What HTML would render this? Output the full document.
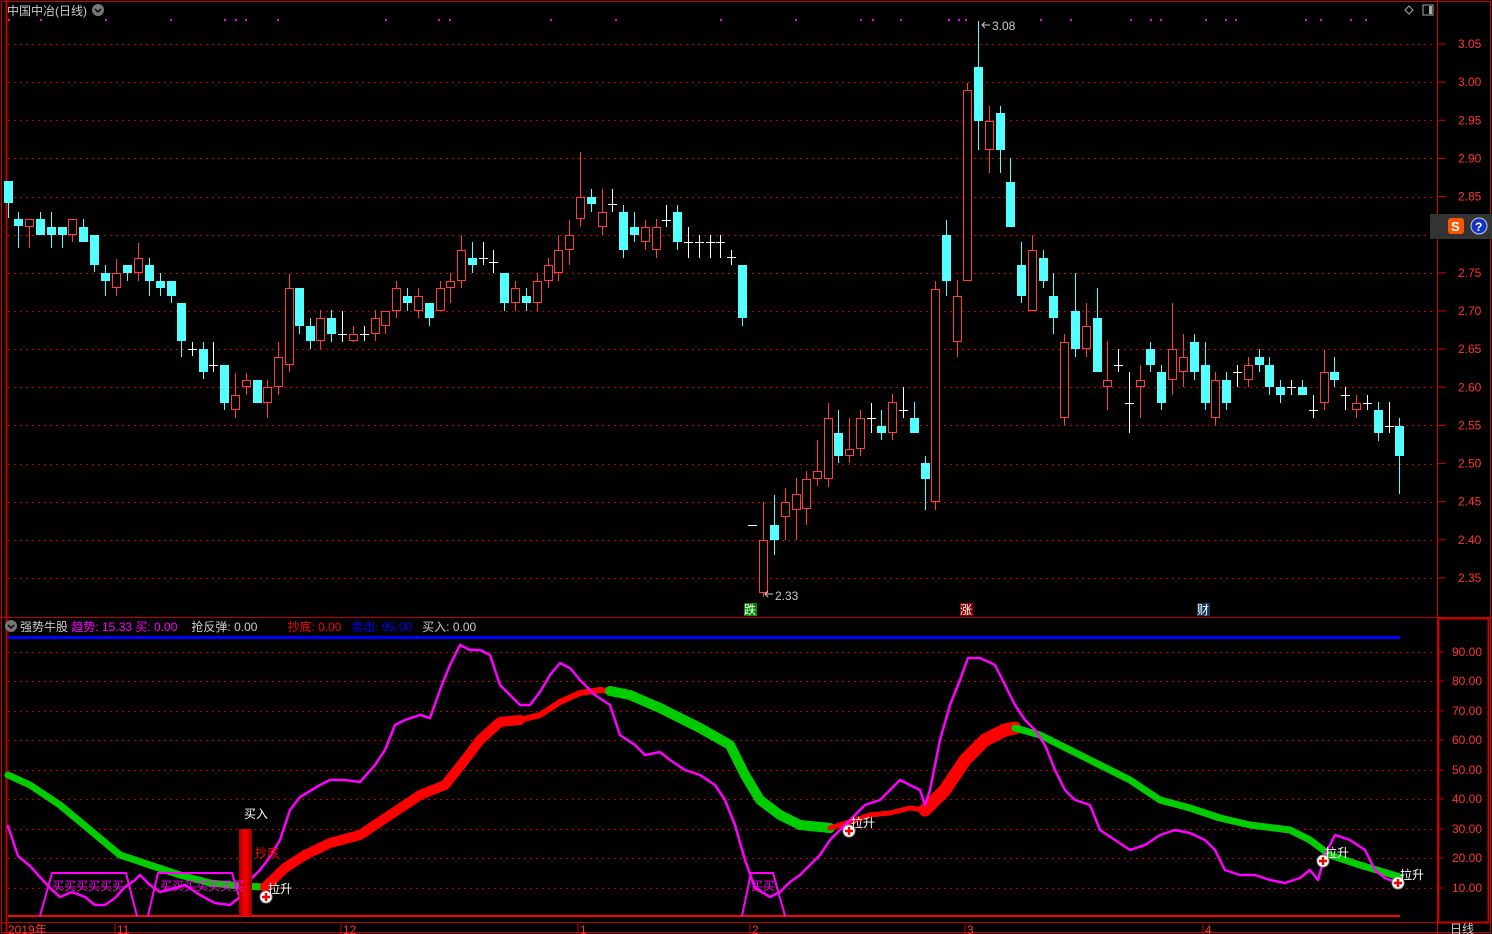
<!DOCTYPE html>
<html><head><meta charset="utf-8"><style>
html,body{margin:0;padding:0;background:#000;width:1492px;height:934px;overflow:hidden}
svg{display:block}
text{font-family:"Liberation Sans","Noto Sans CJK SC",sans-serif}
</style></head><body>
<svg id="s" width="1492" height="934" xmlns="http://www.w3.org/2000/svg">
<rect width="1492" height="934" fill="#000"/>
<g id="grid" stroke="#b00" stroke-width="1" stroke-dasharray="2,4"></g>
<!-- frame -->
<rect x="1.5" y="1.5" width="1489" height="931" fill="none" stroke="#c00" stroke-width="1"/>
<line x1="6.5" y1="0" x2="6.5" y2="934" stroke="#c00" stroke-width="2"/>
<line x1="1437.5" y1="0" x2="1437.5" y2="934" stroke="#c00"/>
<line x1="0" y1="617.5" x2="1492" y2="617.5" stroke="#b00"/>
<rect x="1438.5" y="618.5" width="50" height="304" fill="none" stroke="#c00" stroke-width="2"/>
<line x1="0" y1="922.5" x2="1437" y2="922.5" stroke="#b00"/>
<line x1="8" y1="637.5" x2="1400" y2="637.5" stroke="#00f" stroke-width="3"/>
<line x1="8" y1="916" x2="1400" y2="916" stroke="#f00" stroke-width="2"/>
<g id="candles"></g>
<g id="lower"></g>
<!-- header texts -->
<text x="7" y="15" fill="#ccc" font-size="12">中国中冶(日线)</text>
<circle cx="98" cy="10" r="6" fill="#777"/><path d="M95 9l3 3 3-3" stroke="#000" stroke-width="1.5" fill="none"/>
<path d="M1409 6l4 4-4 4-4-4z" stroke="#aaa" fill="none"/>
<rect x="1423" y="5" width="10" height="10" stroke="#aaa" fill="none"/><rect x="1429" y="6" width="3" height="8" fill="#aaa"/>
<text x="992" y="30" fill="#ccc" font-size="12">3.08</text>
<path d="M990 25h-8m3-3l-3 3 3 3" stroke="#ccc" fill="none"/>
<text x="775" y="600" fill="#ccc" font-size="12">2.33</text>
<path d="M773 594h-8m3-3l-3 3 3 3" stroke="#ccc" fill="none"/>
<rect x="744" y="603" width="13" height="13" fill="#080"/><text x="744" y="614" fill="#fff" font-size="12">跌</text>
<rect x="960" y="603" width="13" height="13" fill="#800"/><text x="960" y="614" fill="#fff" font-size="12">涨</text>
<rect x="1197" y="603" width="13" height="13" fill="#135"/><text x="1197" y="614" fill="#fff" font-size="12">财</text>
<g id="axis" fill="#f33" font-size="12"></g>
<!-- icons panel -->
<rect x="1430" y="214" width="62" height="25" fill="#333"/>
<rect x="1448" y="218" width="16" height="16" rx="3" fill="#f50"/><text x="1451" y="231" fill="#fff" font-size="13" font-weight="bold">S</text>
<circle cx="1479" cy="226" r="8" fill="#13c" stroke="#ccc"/><text x="1475" y="231" fill="#fff" font-size="12" font-weight="bold">?</text>
<!-- lower header -->
<circle cx="11" cy="626" r="6" fill="#777"/><path d="M8 625l3 3 3-3" stroke="#000" stroke-width="1.5" fill="none"/>
<text x="20" y="631" font-size="12" fill="#ccc">强势牛股 <tspan fill="#f0f">趋势: 15.33 买: 0.00</tspan><tspan dx="14" fill="#ccc">抢反弹: 0.00</tspan><tspan dx="30" fill="#f00">抄底: 0.00</tspan><tspan dx="10" fill="#00f">卖出: 95.00</tspan><tspan dx="10" fill="#ccc">买入: 0.00</tspan></text>
<text x="1450" y="933" fill="#ccc" font-size="12">日线</text>
<g fill="#f33" font-size="12">
<text x="8" y="934">2019年</text><text x="117" y="934">11</text><text x="343" y="934">12</text><text x="580" y="934">1</text><text x="752" y="934">2</text><text x="967" y="934">3</text><text x="1205" y="934">4</text>
</g>
<g stroke="#c00"><line x1="115" y1="924" x2="115" y2="934"/><line x1="341" y1="924" x2="341" y2="934"/><line x1="578" y1="924" x2="578" y2="934"/><line x1="750" y1="924" x2="750" y2="934"/><line x1="965" y1="924" x2="965" y2="934"/><line x1="1203" y1="924" x2="1203" y2="934"/></g>
</svg>
<script>
var NS="http://www.w3.org/2000/svg";
function el(p,t,a){var e=document.createElementNS(NS,t);for(var k in a)e.setAttribute(k,a[k]);p.appendChild(e);return e;}
var g=document.getElementById('grid');
for(var k=0;k<15;k++){var y=44+Math.round(38.14*k)+.5;el(g,'line',{x1:8,y1:y,x2:1436,y2:y});}
var ly=[652,681,711,740,770,799,829,858,888];
ly.forEach(function(y){el(g,'line',{x1:8,y1:y+.5,x2:1436,y2:y+.5});});
var ax=document.getElementById('axis');
for(var k=0;k<15;k++){var y=44+38.14*k;var p=(3.05-0.05*k).toFixed(2);el(ax,'line',{x1:1438,y1:y,x2:1446,y2:y,stroke:'#c00'});var t=el(ax,'text',{x:1458,y:y+4});t.textContent=p;}
ly.forEach(function(y,i){el(ax,'line',{x1:1438,y1:y,x2:1444,y2:y,stroke:'#c00'});var t=el(ax,'text',{x:1452,y:y+4});t.textContent=(90-10*i).toFixed(2);});
// magenta dots
[8,40,105,170,224,235,245,277,385,438,449,550,615,720,795,860,872,900,948,958,965,1040,1070,1130,1150,1160,1205,1225,1235,1305,1320,1350,1365].forEach(function(x){el(g.parentNode,'rect',{x:x,y:19,width:2,height:2,fill:'#f0f'});});
// candles [x,c/r/w,bodyTop,bodyBot,wickTop,wickBot]
var C=[[8,'c',181,203,181,218],[18,'c',219,226,212,248],[29,'r',219,227,219,248],[40,'c',219,235,212,235],[51,'c',227,235,212,248],[62,'c',227,235,227,248],[72,'r',219,235,219,242],[83,'c',227,242,219,242],[94,'c',235,265,235,272],[105,'c',273,281,265,296],[116,'r',273,288,259,296],[127,'c',265,273,265,281],[138,'r',258,273,243,281],[149,'c',265,281,258,296],[160,'c',281,288,273,296],[171,'c',281,296,281,303],[181,'c',303,341,303,357],[192,'w',349,349,342,356],[203,'c',349,372,342,379],[213,'w',365,365,342,372],[224,'c',365,403,365,410],[235,'r',395,410,373,418],[246,'r',380,387,373,395],[257,'c',380,403,380,403],[267,'r',387,403,380,418],[278,'r',357,387,342,395],[289,'r',288,365,274,372],[299,'c',288,326,288,334],[310,'c',326,341,318,349],[320,'r',318,341,310,349],[331,'c',318,334,310,342],[342,'w',334,334,311,342],[353,'r',334,341,326,342],[364,'w',334,334,326,341],[375,'r',318,334,310,341],[385,'r',311,326,311,334],[396,'r',288,311,281,318],[407,'c',296,303,288,311],[418,'r',296,311,288,318],[429,'c',303,318,303,326],[440,'r',288,311,281,311],[450,'r',281,288,273,303],[461,'r',250,281,235,288],[472,'c',258,265,242,273],[483,'w',258,258,242,265],[493,'w',262,262,250,273],[504,'c',273,303,273,311],[515,'r',288,303,281,311],[526,'c',296,303,288,311],[537,'r',281,303,273,311],[548,'r',265,281,258,288],[558,'r',250,273,235,281],[569,'r',235,250,220,265],[580,'r',197,219,152,227],[591,'c',197,204,189,212],[602,'r',212,227,189,235],[612,'w',204,204,189,212],[623,'c',212,250,205,258],[634,'c',227,235,212,242],[645,'r',227,242,220,250],[656,'r',227,250,219,258],[666,'w',220,220,205,227],[677,'c',212,242,205,250],[688,'w',242,242,227,258],[699,'w',242,242,235,258],[710,'w',242,242,235,258],[720,'w',242,242,235,258],[731,'w',257,257,250,265],[742,'c',265,318,265,326],[752,'w',525,525,525,525],[763,'r',540,593,502,597],[774,'c',525,540,495,555],[785,'r',502,517,488,540],[796,'r',494,510,478,540],[806,'r',479,509,471,525],[817,'r',471,479,440,486],[828,'r',418,479,403,487],[838,'c',433,456,410,463],[849,'r',449,456,418,463],[860,'r',418,449,410,456],[871,'w',418,418,403,433],[881,'c',426,433,410,440],[892,'r',402,433,394,440],[903,'w',410,410,387,418],[914,'c',418,433,402,433],[925,'c',463,479,456,510],[935,'r',289,502,281,510],[946,'c',235,281,220,296],[957,'r',296,342,280,357],[967,'r',90,281,83,281],[978,'c',67,121,21,150],[989,'r',121,150,106,173],[1000,'c',113,150,106,173],[1010,'c',182,227,158,227],[1021,'c',265,296,242,303],[1032,'r',250,311,235,311],[1043,'c',258,281,250,288],[1053,'c',296,318,273,334],[1064,'r',342,418,334,425],[1075,'c',311,349,273,357],[1086,'r',326,349,303,357],[1097,'c',318,372,288,372],[1107,'r',380,387,341,410],[1118,'w',365,365,349,372],[1129,'w',403,403,372,433],[1140,'r',380,387,365,418],[1150,'c',349,365,342,372],[1161,'c',372,403,365,410],[1172,'r',349,380,303,395],[1183,'r',357,372,334,387],[1194,'c',342,372,334,380],[1205,'c',365,403,342,410],[1215,'r',380,418,372,425],[1226,'c',380,403,372,410],[1237,'w',372,372,365,387],[1248,'r',365,380,357,387],[1259,'c',357,365,349,372],[1269,'c',365,387,357,395],[1280,'c',387,395,380,403],[1291,'w',387,387,380,395],[1302,'c',387,395,380,395],[1313,'w',410,410,395,418],[1324,'r',372,403,350,410],[1334,'c',372,380,357,387],[1345,'w',395,395,387,410],[1356,'r',403,410,395,418],[1367,'w',403,403,395,410],[1378,'c',410,433,402,441],[1389,'w',426,426,402,433],[1399,'c',426,456,418,494]];
var cg=document.getElementById('candles');
C.forEach(function(d){var x=d[0],t=d[1];var col=t=='c'?'#54ffff':t=='r'?'#ff3c3c':'#fff';
el(cg,'line',{x1:x+.5,y1:d[4],x2:x+.5,y2:d[5],stroke:col});
if(t=='w'){el(cg,'line',{x1:x-4,y1:d[2]+.5,x2:x+5,y2:d[2]+.5,stroke:col});}
else if(t=='c'){el(cg,'rect',{x:x-4,y:d[2],width:9,height:Math.max(d[3]-d[2],1),fill:col});}
else{el(cg,'rect',{x:x-3.5,y:d[2]+.5,width:8,height:Math.max(d[3]-d[2]-1,1),fill:'#000',stroke:col});}
});
var lg=document.getElementById('lower');
function pl(pts,col,w){el(lg,'polyline',{points:pts,fill:'none',stroke:col,'stroke-width':w,'stroke-linejoin':'round','stroke-linecap':'round'});}
// ribbons
pl("8,775 30,785 60,805 90,830 120,855 150,865 180,875 210,883 240,886 265,887","#0c0",7);
pl("265,887 285,868 305,855 330,843 360,835 390,815 420,795 445,785 465,760 480,740 500,722 520,720","#f00",10);
pl("520,720 540,715 560,702 580,693 600,690 610,691","#f00",6);
pl("610,691 630,695 660,708 700,728 730,745 745,775 760,800 780,815 800,825 830,828","#0c0",10);
pl("830,828 850,822 870,815 890,813 910,808 925,810","#f00",5);
pl("925,810 945,790 965,760 985,740 1005,730 1015,728","#f00",13);
pl("1015,728 1040,735 1070,750 1100,765 1130,780 1160,800 1190,808 1220,818 1250,825 1290,830 1310,840 1330,855 1360,865 1400,877","#0c0",7);
// trapezoids
pl("40,916 52,873 126,873 137,916","#f0f",2);
pl("148,916 158,873 232,873 245,916","#f0f",2);
pl("742,916 751,873 773,873 785,916","#f0f",2);
// magenta line
pl("8,826 18,856 30,866 40,877 50,888 60,897 72,892 85,897 95,905 105,905 115,898 125,887 135,880 140,875 150,885 160,892 175,888 185,885 200,895 215,903 230,905 240,897 250,880 260,870 270,857 280,840 290,810 300,797 320,785 330,780 345,780 360,782 375,765 385,750 395,725 405,720 420,715 430,718 440,690 450,665 460,645 470,650 480,650 490,655 500,685 510,695 520,705 530,705 540,692 550,675 560,663 570,668 580,680 595,695 610,705 620,735 635,745 645,755 660,752 670,760 685,770 700,775 715,785 725,800 735,825 745,860 755,888 770,897 780,892 790,882 800,875 810,865 820,855 830,840 840,830 850,820 865,805 880,800 890,790 900,780 910,785 920,790 925,805 930,790 940,740 950,705 960,680 968,658 980,658 995,665 1005,685 1015,705 1025,720 1035,730 1045,745 1055,770 1065,790 1075,800 1090,805 1100,830 1115,840 1130,850 1145,845 1160,835 1175,830 1190,833 1205,840 1215,850 1225,870 1240,875 1255,875 1270,880 1285,883 1300,878 1310,870 1318,880 1325,855 1335,835 1350,840 1365,850 1375,870 1385,878 1398,883","#f0f",2.5);
// buy bar
var gr=el(lg,'linearGradient',{id:'bg'});el(gr,'stop',{offset:'0','stop-color':'#a00'});el(gr,'stop',{offset:'.5','stop-color':'#f00'});el(gr,'stop',{offset:'1','stop-color':'#900'});
el(lg,'rect',{x:239,y:829,width:13,height:87,fill:'url(#bg)'});
function tx(x,y,s,c){var t=el(lg,'text',{x:x,y:y,fill:c,'font-size':12});t.textContent=s;}
tx(244,818,'买入','#fff');tx(255,857,'抄底','#f00');
['52,890','160,890','751,890'].forEach(function(p,i){var a=p.split(',');var n=i==1?7:i==0?6:2;tx(+a[0],+a[1],'买买买买买买买'.slice(0,n),'#f0f');});
function plus(x,y,lbl){el(lg,'circle',{cx:x,cy:y,r:6,fill:'#fff',stroke:'#999'});el(lg,'path',{d:'M'+(x-4)+' '+y+'h8M'+x+' '+(y-4)+'v8',stroke:'#e00','stroke-width':2.5});tx(x+2,y-4,'拉升','#fff');}
plus(266,897);plus(849,831);plus(1323,861);plus(1398,883);
</script>
</body></html>
